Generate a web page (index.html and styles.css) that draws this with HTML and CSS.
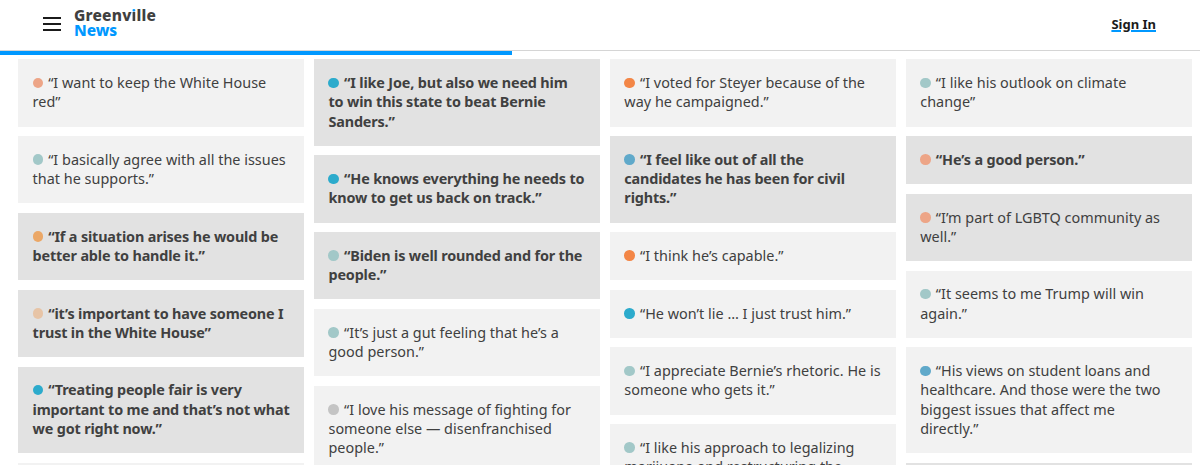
FILE: index.html
```html
<!DOCTYPE html>
<html lang="en">
<head>
<meta charset="utf-8">
<title>Greenville News</title>
<link rel="stylesheet" href="styles.css">
</head>
<body>
<header class="header">
  <svg class="menu" width="18" height="14" viewBox="0 0 18 14"><path d="M0 1h18M0 7h18M0 13h18" stroke="#1b1b1b" stroke-width="1.8"/></svg>
  <div class="logo"><div class="logo-top">Greenv<span class="logo-i">i</span>lle</div><div class="logo-bottom">News</div></div>
  <a class="sign-in">Sign In</a>
</header>
<div class="progress"></div>
<main class="board">
  <div class="column">
    <p class="card"><i class="dot salmon"></i>“I want to keep the White House<br>red”</p>
    <p class="card"><i class="dot sage"></i>“I basically agree with all the issues<br>that he supports.”</p>
    <p class="card dark bold"><i class="dot amber"></i>“If a situation arises he would be<br>better able to handle it.”</p>
    <p class="card dark bold"><i class="dot peach"></i>“it’s important to have someone I<br>trust in the White House”</p>
    <p class="card dark bold"><i class="dot teal"></i>“Treating people fair is very<br>important to me and that’s not what<br>we got right now.”</p>
    <p class="card"></p>
  </div>
  <div class="column">
    <p class="card dark bold"><i class="dot teal"></i>“I like Joe, but also we need him<br>to win this state to beat Bernie<br>Sanders.”</p>
    <p class="card dark bold"><i class="dot teal"></i>“He knows everything he needs to<br>know to get us back on track.”</p>
    <p class="card dark bold"><i class="dot sage"></i>“Biden is well rounded and for the<br>people.”</p>
    <p class="card"><i class="dot sage"></i>“It’s just a gut feeling that he’s a<br>good person.”</p>
    <p class="card"><i class="dot gray"></i>“I love his message of fighting for<br>someone else — disenfranchised<br>people.”</p>
  </div>
  <div class="column">
    <p class="card"><i class="dot orange"></i>“I voted for Steyer because of the<br>way he campaigned.”</p>
    <p class="card dark bold"><i class="dot blue"></i>“I feel like out of all the<br>candidates he has been for civil<br>rights.”</p>
    <p class="card"><i class="dot orange"></i>“I think he’s capable.”</p>
    <p class="card"><i class="dot teal"></i>“He won’t lie … I just trust him.”</p>
    <p class="card"><i class="dot sage"></i>“I appreciate Bernie’s rhetoric. He is<br>someone who gets it.”</p>
    <p class="card"><i class="dot sage"></i>“I like his approach to legalizing<br>marijuana and restructuring the</p>
  </div>
  <div class="column">
    <p class="card"><i class="dot sage"></i>“I like his outlook on climate<br>change”</p>
    <p class="card dark bold"><i class="dot salmon"></i>“He’s a good person.”</p>
    <p class="card dark"><i class="dot salmon"></i>“I’m part of LGBTQ community as<br>well.”</p>
    <p class="card"><i class="dot sage"></i>“It seems to me Trump will win<br>again.”</p>
    <p class="card"><i class="dot blue"></i>“His views on student loans and<br>healthcare. And those were the two<br>biggest issues that affect me<br>directly.”</p>
    <p class="card dark"></p>
  </div>
</main>
</body>
</html>
```

FILE: styles.css
```css
* { box-sizing: border-box; }
body { margin: 0; height: 465px; overflow: hidden; background: #fff; color: #404040; font-family: "Noto Sans", sans-serif; }
.header { display: flex; height: 51px; padding: 0 44px 0 43px; border-bottom: 1px solid #d5d5d5; }
.menu { margin-top: 17px; }
.logo { margin: 8px 0 0 13px; font-size: 15.5px; line-height: 15px; font-weight: 800; letter-spacing: 0.2px; }
.logo-i { background: linear-gradient(#0098ff 8px, #404040 8px); background-clip: text; -webkit-background-clip: text; color: transparent; }
.logo-bottom { color: #0098ff; letter-spacing: -0.1px; }
.sign-in { margin: 15px 0 0 auto; color: #1b1b1b; font-size: 13px; line-height: 19px; font-weight: 700; text-decoration-line: underline; text-decoration-color: #0098ff; text-decoration-thickness: 1.5px; text-underline-offset: 1px; }
.progress { width: 512px; height: 4px; margin-bottom: 4.4px; background: #0098ff; }
.board { display: grid; grid-template-columns: repeat(4, 286.3px); column-gap: 9.6px; padding-left: 18.2px; }
.column { display: flex; flex-direction: column; gap: 9.6px; }
.card { margin: 0; min-height: 48px; padding: 13.9px 14.4px 14.9px; background: #f2f2f2; font-size: 14.4px; line-height: 19.2px; letter-spacing: 0.02px; white-space: nowrap; }
.dark { background: #e2e2e2; }
.bold { font-weight: 700; letter-spacing: -0.16px; }
.dot { display: inline-block; width: 10.6px; height: 10.6px; margin-right: 5px; border-radius: 50%; }
.salmon { background: #eda587; }
.sage { background: #a2c8c8; }
.amber { background: #eba766; }
.peach { background: #e7c4a6; }
.teal { background: #2cabcc; }
.gray { background: #c4c4c4; }
.orange { background: #f38646; }
.blue { background: #60a9ca; }
```
